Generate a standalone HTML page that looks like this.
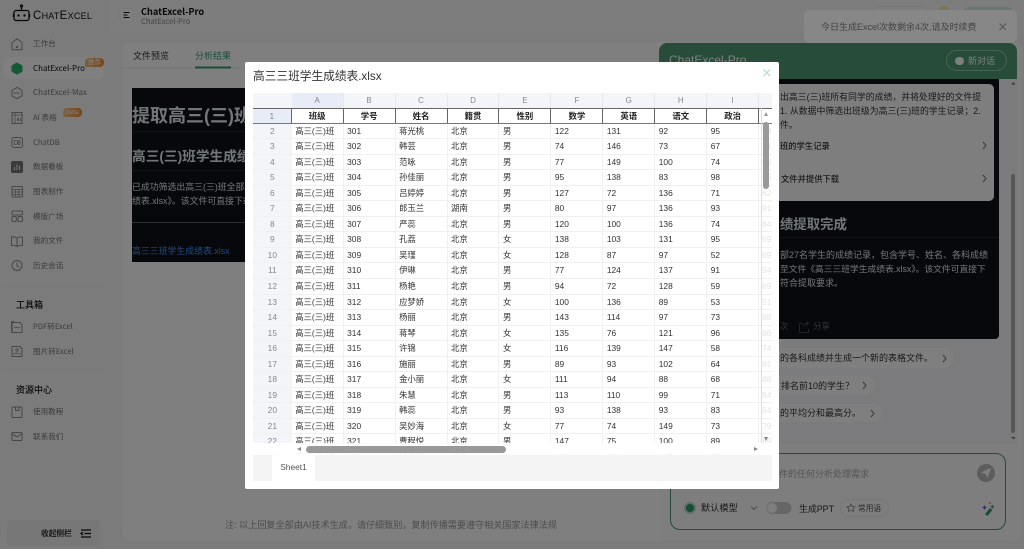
<!DOCTYPE html>
<html lang="zh"><head><meta charset="utf-8"><title>ChatExcel</title>
<style>
*{box-sizing:border-box;margin:0;padding:0}
html{background:#7b7b7b}
html,body{width:1024px;height:549px;overflow:hidden}
body{position:relative;background:#f6f6f7;font-family:"Liberation Sans","Noto Sans CJK SC",sans-serif;color:#333;filter:blur(.3px)}
.a{position:absolute}
.t{position:absolute;white-space:nowrap;line-height:12px;margin-top:-6px}
.n{font-family:"Noto Sans CJK SC","Liberation Sans",sans-serif;font-size:7.600px;color:#777;left:33px}
#ov{position:absolute;left:0;top:0;width:1024px;height:549px;background:rgba(0,0,0,.5)}
#modal{position:absolute;left:245px;top:62px;width:534px;height:427px;background:#fff;border-radius:2px}
#sheet{position:absolute;left:8px;top:30.700px;width:519px;height:362.300px;overflow:hidden;background:#fff;font-size:8.400px;color:#333}
.r{display:flex;height:15.550px;line-height:15px;border-bottom:1px solid #f0f0f0;white-space:nowrap}
.r>*{flex:none;width:51.950px;padding-left:3.500px;border-right:1px solid #f0f0f0;overflow:hidden}
.r>b{width:38.700px;padding:0;text-align:center;background:#f4f5f8;color:#888;font-weight:400;border-right:0}
.r>i{font-style:normal;color:#e4e4e4;border:0;padding-left:3px}
.h{height:15.300px;background:#f4f5f8;border:0;color:#888;font-size:8px;line-height:15px}
.h>*{text-align:center;padding:0;border-right:1px solid #e8e8ea}
.h>:nth-child(2){background:#e8ecf7}
.f{border-top:1px solid #666;border-bottom:1px solid #777;font-weight:700;color:#222}
.f>*{text-align:center;padding:0;border-right:1px solid #666}
.f>b{background:#e8ecf7;color:#888;border-right:1px solid #666}
</style></head><body>

<!-- page under overlay -->
<div class="a" style="left:110px;top:0;width:914px;height:31px;background:#fafafa"></div>
<div class="a" style="left:122px;top:42px;width:900px;height:499px;background:#fff;border-radius:8px"></div>
<div class="a" style="left:3px;top:57px;width:101px;height:22px;background:#fff;border-radius:4px"></div>

<svg class="a" style="left:0;top:0" width="1024" height="549" viewBox="0 0 1024 549" fill="none" stroke="#8e8e8e" stroke-width="1">
<!-- logo -->
<g stroke="#111" stroke-width="1.300"><rect x="14" y="10.500" width="15" height="10" rx="2"/><path d="M21.500 10.500V7"/><circle cx="21.500" cy="6" r="1"/><path d="M13.500 14v3M29.500 14v3"/></g>
<circle cx="18.500" cy="15.500" r="1.200" fill="#111" stroke="none"/><circle cx="24.500" cy="15.500" r="1.200" fill="#111" stroke="none"/>
<!-- home -->
<path d="M12 42.500 17 38.700l5 3.800v6.500a.8.8 0 0 1-.8.8h-8.400a.8.8 0 0 1-.8-.8z"/><circle cx="17" cy="47" r=".6" fill="#8e8e8e"/>
<!-- pro -->
<path d="M17 63l5 2.800v5.500L17 74l-5-2.700v-5.500z" fill="#28b46e" stroke="#28b46e"/>
<!-- max -->
<path d="M17 87.500l5 2.800v5.600L17 98.700l-5-2.800v-5.600z"/><path d="M13.800 93h6.400" stroke-width="1.600" stroke-dasharray="1 .6"/>
<!-- ai -->
<rect x="12" y="112.500" width="10" height="11"/><path d="M15 112.500v11M12 115h10M17 121l1-3 1 3M20.500 118v3" stroke-width=".8"/>
<!-- db -->
<rect x="12" y="137.500" width="10.500" height="10" rx="2"/><path d="M14.500 140.500v4h1a2 2 0 0 0 0-4zM18 140.500v4h1.200a1 1 0 0 0 0-2H18m1.200 0a1 1 0 0 0 0-2H18" stroke-width=".7"/>
<!-- data -->
<rect x="11.500" y="161.500" width="11" height="11" rx="1.500" fill="#777" stroke="#777"/><path d="M14.500 170v-3M17 170v-5.500M19.500 170v-4" stroke="#ddd" stroke-width="1.200"/>
<!-- chart -->
<rect x="12" y="186.500" width="10.500" height="10.500" rx="1"/><path d="M12 189.500h10.500M12 192h10.500M12 194.500h10.500M15.500 189.500V197M19 189.500V197" stroke-width=".7"/>
<!-- template -->
<rect x="12" y="211" width="10.500" height="4" rx="1"/><rect x="12" y="216.500" width="4.300" height="5" rx="1"/><rect x="18" y="216.500" width="4.500" height="5" rx="1"/>
<!-- book -->
<path d="M17 238c-1.500-1-3.500-1.200-5.500-1v8.500c2-.2 4 0 5.500 1 1.500-1 3.500-1.200 5.500-1V237c-2-.2-4 0-5.500 1zM17 238v8.500"/>
<!-- clock -->
<circle cx="17" cy="265.500" r="5"/><path d="M17 262.500v3.300l2 1.500"/>
<!-- pdf -->
<path d="M12 322.500h8l2 2v8h-10zM14 322.500v-.8h-2.500v9.500h.5"/><path d="M14 327.500h6" stroke-width="1.200" stroke-dasharray="1.200 .5"/>
<!-- image -->
<path d="M12 346.500h8l2 2v8h-10z"/><circle cx="17" cy="350" r="1.200" stroke-width=".8"/><path d="M13.500 354.500c2-2 3-2 4-1s2 .5 3-.5" stroke-width=".8"/>
<!-- guide -->
<rect x="12" y="407" width="10" height="10.500" rx="1"/><path d="M15.500 407v3.500h3.500V407"/>
<!-- mail -->
<rect x="12" y="432.500" width="10" height="8" rx=".8"/><path d="M12 433.500l5 3.500 5-3.500"/>
<!-- dividers -->
<path d="M3 285.500h101M3 370.500h101" stroke="#f0f0f0"/>
<!-- header toggle -->
<rect x="120" y="8.500" width="13" height="13.500" rx="2" fill="#fff" stroke="#eee"/>
<path d="M123.500 12.500h6M123.500 15h4M123.500 17.500h6" stroke="#111"/>
<!-- tabs -->
<path d="M122 68h537" stroke="#eee"/>
<path d="M195 67.500h36" stroke="#2f9a6a" stroke-width="2"/>
</svg>

<div class="t" style="left:33px;top:16px;font-size:9px;color:#111;letter-spacing:.25px"><span style="font-size:11.500px">C</span>HAT<span style="font-size:11.500px">E</span>XCEL</div>
<div class="t n" style="top:44px">工作台</div>
<div class="t n" style="top:68.500px;color:#111;font-size:8px">ChatExcel-Pro</div>
<div class="t n" style="top:93px;font-size:8px">ChatExcel-Max</div>
<div class="t n" style="top:117.500px">AI 表格</div>
<div class="t n" style="top:142.500px">ChatDB</div>
<div class="t n" style="top:167px">数据看板</div>
<div class="t n" style="top:191.500px">图表制作</div>
<div class="t n" style="top:216.500px">模版广场</div>
<div class="t n" style="top:241px">我的文件</div>
<div class="t n" style="top:265.500px">历史会话</div>
<div class="t" style="left:16px;top:304.500px;font-size:9px;font-weight:500;color:#111">工具箱</div>
<div class="t n" style="top:327px">PDF转Excel</div>
<div class="t n" style="top:351.500px">图片转Excel</div>
<div class="t" style="left:16px;top:390px;font-size:9px;font-weight:500;color:#111">资源中心</div>
<div class="t n" style="top:412px">使用教程</div>
<div class="t n" style="top:437px">联系我们</div>
<div class="a" style="left:7px;top:520px;width:93px;height:26px;background:#efefef;border-radius:4px"></div>
<svg class="a" style="left:79px;top:526px" width="14" height="14" viewBox="0 0 14 14" fill="none" stroke="#111" stroke-width="1.200"><path d="M2 4h10M5.500 7.500H12M2 11h10M4 6l-2 1.500L4 9"/></svg>
<div class="t" style="left:41px;top:533.500px;font-size:7.700px;font-weight:700;color:#333">收起侧栏</div>
<div class="a" style="left:85px;top:58px;width:19px;height:9px;background:linear-gradient(90deg,#f5c080,#f08a30);border-radius:4px 4px 4px 0;color:#fff;font-size:6.500px;line-height:9px;text-align:center">推荐</div>
<div class="a" style="left:63px;top:108px;width:19px;height:9px;background:linear-gradient(90deg,#f7c585,#f08a30);border-radius:4px 4px 4px 0;color:#fff;font-size:6.500px;line-height:9px;text-align:center">beta</div>

<div class="t" style="left:141px;top:11px;font-size:9.200px;font-weight:700;color:#111;font-family:'Noto Sans CJK SC','Liberation Sans',sans-serif">ChatExcel-Pro</div>
<div class="t" style="left:141px;top:22px;font-size:7.600px;color:#888;font-family:'Noto Sans CJK SC','Liberation Sans',sans-serif">ChatExcel-Pro</div>

<div class="t" style="left:133px;top:55.500px;font-size:9px;color:#333">文件预览</div>
<div class="t" style="left:195px;top:55.500px;font-size:9px;color:#2f9a6a">分析结果</div>

<!-- left dark doc -->
<div class="a" style="left:132px;top:88px;width:400px;height:174px;background:#0d1117;overflow:hidden;color:#e6edf3">
 <div class="t" style="left:0;top:28px;font-size:18px;font-weight:700;line-height:22px;margin-top:-11px">提取高三(三)班学生成绩</div>
 <div class="a" style="left:0;top:43px;width:400px;height:1px;background:#21262d"></div>
 <div class="t" style="left:0;top:69px;font-size:13.700px;font-weight:700;line-height:18px;margin-top:-9px">高三(三)班学生成绩提取完成</div>
 <div class="a" style="left:0;top:82px;width:400px;height:1px;background:#21262d"></div>
 <div class="t" style="left:0;top:99px;font-size:8.900px">已成功筛选出高三(三)班全部27名学生的成绩记录</div>
 <div class="t" style="left:0;top:113px;font-size:8.900px">绩表.xlsx》。该文件可直接下载</div>
 <div class="a" style="left:0;top:134px;width:400px;height:1px;background:#565c64"></div>
 <div class="t" style="left:0;top:163px;font-size:8.900px;color:#4493f8">高三三班学生成绩表.xlsx</div>
</div>
<div class="t" style="left:225px;top:525px;font-size:9.100px;color:#999">注: 以上回复全部由AI技术生成&#65292;请仔细甄别&#65292;复制传播需要遵守相关国家法律法规</div>

<!-- top-right remnants -->
<div class="a" style="left:875px;top:6px;width:50px;height:16px;border:1px solid #eee;border-radius:5px;background:#fff"></div>
<div class="a" style="left:938px;top:6px;width:12px;height:12px;border-radius:50%;background:#ffe9a0"></div>
<div class="a" style="left:963px;top:7px;width:50px;height:16px;border-radius:5px;background:#d0f0e0"></div>

<!-- right panel -->
<div class="a" style="left:659px;top:43px;width:358px;height:498px;background:#f7f7fa;border-radius:8px;overflow:hidden">
 <div class="a" style="left:0;top:0;width:358px;height:36px;background:#4e9b75"></div>
 <div class="t" style="left:10px;top:17px;font-size:12px;color:#fff;line-height:14px;margin-top:-7px">ChatExcel-Pro</div>
 <div class="a" style="left:287px;top:7px;width:61px;height:21px;border:1px solid #8cc4a8;border-radius:11px"></div>
 <div class="a" style="left:296px;top:13.500px;width:8.500px;height:8.500px;border-radius:50%;background:#fff"></div>
 <div class="t" style="left:309px;top:18px;font-size:9px;color:#fff">新对话</div>
 <!-- dark card -->
 <div class="a" style="left:0;top:36px;width:340px;height:260px;background:#0d1117;border-radius:0 0 4px 4px"></div>
 <div class="a" style="left:0;top:41px;width:335px;height:117px;background:#fdfdff;border-radius:0 5px 5px 0"></div>
 <!-- scrollbar -->
 <div class="a" style="left:352px;top:131px;width:4px;height:259px;background:#b0b0b0;border-radius:2px"></div>
 <!-- input section -->
 <div class="a" style="left:0;top:400px;width:358px;height:98px;background:#fcfcfc"></div>
 <div class="a" style="left:11px;top:410px;width:336px;height:77px;border:1px solid #4e9b75;border-radius:10px"></div>
</div>
<div style="font-size:9px;color:#333">
 <div class="a" style="left:700px;top:348px;width:253px;height:20px;background:#fff;border-radius:8px"></div>
 <div class="a" style="left:700px;top:376px;width:174px;height:19px;background:#fff;border-radius:8px"></div>
 <div class="a" style="left:700px;top:404px;width:182px;height:18px;background:#fff;border-radius:8px"></div>
 <div class="t" style="left:780px;top:96.700px;font-size:8.900px">出高三(三)班所有同学的成绩&#65292;并将处理好的文件提</div>
 <div class="t" style="left:780px;top:110.500px;font-size:8.900px">1. 从数据中筛选出班级为高三(三)班的学生记录&#65307;2.</div>
 <div class="t" style="left:780px;top:124.500px;font-size:8.900px">件。</div>
 <div class="t" style="left:780px;top:145.500px;font-size:8.300px;font-weight:500">班的学生记录</div>
 <div class="t" style="left:781px;top:178.500px;font-size:8.300px;font-weight:500">文件并提供下载</div>
 <div class="t" style="left:780px;top:225px;font-size:13.400px;font-weight:700;color:#e6edf3;line-height:16px;margin-top:-8px">绩提取完成</div>
 <div class="a" style="left:779px;top:237px;width:220px;height:1px;background:#21262d"></div>
 <div class="t" style="left:780px;top:255px;color:#e6edf3">部27名学生的成绩记录&#65292;包含学号、姓名、各科成绩</div>
 <div class="t" style="left:780px;top:269px;font-size:8.750px;color:#e6edf3">至文件《高三三班学生成绩表.xlsx》。该文件可直接下</div>
 <div class="t" style="left:780px;top:283px;color:#e6edf3">符合提取要求。</div>
 <div class="t" style="left:780px;top:326px;font-size:8.500px;color:#666">次</div>
 <div class="t" style="left:813px;top:326px;font-size:8.500px;color:#666">分享</div>
 <div class="t" style="left:780px;top:358px">的各科成绩并生成一个新的表格文件。</div>
 <div class="t" style="left:781px;top:385.500px">排名前10的学生&#65311;</div>
 <div class="t" style="left:780px;top:413px">的平均分和最高分。</div>
 <div class="t" style="left:779px;top:474px;color:#aaa">件的任何分析处理需求</div>
 <div class="t" style="left:701px;top:508px;font-size:9.200px">默认模型</div>
 <div class="t" style="left:799px;top:508.500px;font-size:8.900px">生成PPT</div>
 <div class="t" style="left:858px;top:508.500px;font-size:7.700px;color:#555">常用语</div>
</div>
<svg class="a" style="left:0;top:0" width="1024" height="549" viewBox="0 0 1024 549" fill="none" stroke="#777">
 <path d="M983 142l3 3.500-3 3.500M983 175l3 3.500-3 3.500M943 355l3 3.500-3 3.500M863 382l3 3.500-3 3.500M871 410l3 3.500-3 3.500" />
 <path d="M1011 84.500l2.500-2.500 2 2.500z M1011 437l2.500 2.500 2-2.500z" fill="#777" stroke="none"/>
 <path d="M803 323.500h-3.500v9h9V329M803 326.500c1-2 3-3 5-3m-1.500-1.500 2 1.500-2 1.500" stroke="#555" stroke-width=".8"/>
 <circle cx="986" cy="473" r="9" fill="#bbb" stroke="none"/><path d="M981 472.500l10-4.500-3.500 10-1.800-4z" fill="#fff" stroke="none"/>
 <circle cx="690" cy="508" r="6" fill="#b9dcca" stroke="none"/><circle cx="690" cy="508" r="4" fill="#2f9a6a" stroke="none"/>
 <path d="M751 506.500l3 3 3-3" stroke="#999"/>
 <rect x="766.500" y="502" width="25" height="12" rx="6" fill="#ccc" stroke="none"/><circle cx="772" cy="508" r="5" fill="#fff" stroke="none"/>
 <rect x="840.500" y="499.500" width="48" height="17" rx="8.500" stroke="#eee"/>
 <path d="M851 504l1.200 2.500 2.800.3-2 1.900.5 2.800-2.500-1.400-2.500 1.400.5-2.800-2-1.900 2.800-.3z" stroke="#777" stroke-width=".7"/>
 <path d="M985 514l5-6 2.500 2-5 6z" fill="#3e9a6c" stroke="none"/><path d="M990.500 506.500l2-1.500 1.500 1.500-1.500 2z" fill="#3e9a6c" stroke="none"/>
 <path d="M984.500 505l.8 1.700 1.700.8-1.700.8-.8 1.700-.8-1.700-1.700-.8 1.700-.8z" fill="#6a4ff0" stroke="none"/><circle cx="990" cy="503" r="1" fill="#f0a030" stroke="none"/>
</svg>

<div id="ov"></div>

<!-- toast sits above the overlay -->
<div class="a" style="left:804px;top:10px;width:213px;height:33px;background:#878787;border-radius:6px"></div>
<div class="t" style="left:821px;top:27px;font-size:9px;color:#444">今日生成Excel次数剩余4次,请及时续费</div>
<svg class="a" style="left:998px;top:22px" width="10" height="10" fill="none" stroke="#555"><path d="M1.500 1.500l6.500 6.500M8 1.500L1.500 8"/></svg>

<!-- modal -->
<div id="modal">
 <div class="t" style="left:8px;top:15px;font-size:11.700px;color:#333;line-height:14px;margin-top:-7px">高三三班学生成绩表.xlsx</div>
 <svg class="a" style="left:517px;top:6px" width="10" height="10" fill="none" stroke="#a9d8c4"><path d="M1.500 1.500l6.500 6.500M8 1.500L1.500 8"/></svg>
 <div id="sheet">
  <div class="r h"><b></b><span>A</span><span>B</span><span>C</span><span>D</span><span>E</span><span>F</span><span>G</span><span>H</span><span>I</span><span></span></div>
  <div class="r f"><b>1</b><span>班级</span><span>学号</span><span>姓名</span><span>籍贯</span><span>性别</span><span>数学</span><span>英语</span><span>语文</span><span>政治</span><i></i></div>
  <div class="r"><b>2</b><span>高三(三)班</span><span>301</span><span>蒋光桃</span><span>北京</span><span>男</span><span>122</span><span>131</span><span>92</span><span>95</span><i>53</i></div>
  <div class="r"><b>3</b><span>高三(三)班</span><span>302</span><span>韩芸</span><span>北京</span><span>男</span><span>74</span><span>146</span><span>73</span><span>67</span><i>71</i></div>
  <div class="r"><b>4</b><span>高三(三)班</span><span>303</span><span>范咏</span><span>北京</span><span>男</span><span>77</span><span>149</span><span>100</span><span>74</span><i>56</i></div>
  <div class="r"><b>5</b><span>高三(三)班</span><span>304</span><span>孙佳丽</span><span>北京</span><span>男</span><span>95</span><span>138</span><span>83</span><span>98</span><i>55</i></div>
  <div class="r"><b>6</b><span>高三(三)班</span><span>305</span><span>吕婷婷</span><span>北京</span><span>男</span><span>127</span><span>72</span><span>136</span><span>71</span><i>62</i></div>
  <div class="r"><b>7</b><span>高三(三)班</span><span>306</span><span>郎玉兰</span><span>湖南</span><span>男</span><span>80</span><span>97</span><span>136</span><span>93</span><i>91</i></div>
  <div class="r"><b>8</b><span>高三(三)班</span><span>307</span><span>严蕊</span><span>北京</span><span>男</span><span>120</span><span>100</span><span>136</span><span>74</span><i>84</i></div>
  <div class="r"><b>9</b><span>高三(三)班</span><span>308</span><span>孔荔</span><span>北京</span><span>女</span><span>138</span><span>103</span><span>131</span><span>95</span><i>59</i></div>
  <div class="r"><b>10</b><span>高三(三)班</span><span>309</span><span>吴瑾</span><span>北京</span><span>女</span><span>128</span><span>87</span><span>97</span><span>52</span><i>69</i></div>
  <div class="r"><b>11</b><span>高三(三)班</span><span>310</span><span>伊琳</span><span>北京</span><span>男</span><span>77</span><span>124</span><span>137</span><span>91</span><i>94</i></div>
  <div class="r"><b>12</b><span>高三(三)班</span><span>311</span><span>杨艳</span><span>北京</span><span>男</span><span>94</span><span>72</span><span>128</span><span>59</span><i>69</i></div>
  <div class="r"><b>13</b><span>高三(三)班</span><span>312</span><span>应梦娇</span><span>北京</span><span>女</span><span>100</span><span>136</span><span>89</span><span>53</span><i>51</i></div>
  <div class="r"><b>14</b><span>高三(三)班</span><span>313</span><span>杨丽</span><span>北京</span><span>男</span><span>143</span><span>114</span><span>97</span><span>73</span><i>88</i></div>
  <div class="r"><b>15</b><span>高三(三)班</span><span>314</span><span>蒋琴</span><span>北京</span><span>女</span><span>135</span><span>76</span><span>121</span><span>96</span><i>86</i></div>
  <div class="r"><b>16</b><span>高三(三)班</span><span>315</span><span>许锦</span><span>北京</span><span>女</span><span>116</span><span>139</span><span>147</span><span>58</span><i>74</i></div>
  <div class="r"><b>17</b><span>高三(三)班</span><span>316</span><span>施丽</span><span>北京</span><span>男</span><span>89</span><span>93</span><span>102</span><span>64</span><i>91</i></div>
  <div class="r"><b>18</b><span>高三(三)班</span><span>317</span><span>金小丽</span><span>北京</span><span>女</span><span>111</span><span>94</span><span>88</span><span>68</span><i>88</i></div>
  <div class="r"><b>19</b><span>高三(三)班</span><span>318</span><span>朱慧</span><span>北京</span><span>男</span><span>113</span><span>110</span><span>99</span><span>71</span><i>84</i></div>
  <div class="r"><b>20</b><span>高三(三)班</span><span>319</span><span>韩蕊</span><span>北京</span><span>男</span><span>93</span><span>138</span><span>93</span><span>83</span><i>64</i></div>
  <div class="r"><b>21</b><span>高三(三)班</span><span>320</span><span>吴妙海</span><span>北京</span><span>女</span><span>77</span><span>74</span><span>149</span><span>73</span><i>79</i></div>
  <div class="r"><b>22</b><span>高三(三)班</span><span>321</span><span>曹程悦</span><span>北京</span><span>男</span><span>147</span><span>75</span><span>100</span><span>89</span><i>89</i></div>
  <div class="r"><b>23</b><span>高三(三)班</span><span>322</span><span>钱佳慧</span><span>北京</span><span>女</span><span>117</span><span>126</span><span>145</span><span>77</span><i>87</i></div>
  <!-- v scrollbar -->
  <div class="a" style="left:507.500px;top:15px;width:1px;height:335px;background:#dcdcdc"></div>
  <div class="a" style="left:510px;top:29px;width:6px;height:67px;background:#999;border-radius:3px"></div>
  <div class="a" style="left:510.500px;top:19.500px;width:0;height:0;border:2.500px solid transparent;border-bottom:4px solid #999;border-top:0"></div>
  <div class="a" style="left:510.500px;top:344.500px;width:0;height:0;border:2.500px solid transparent;border-top:4px solid #888;border-bottom:0"></div>
  <!-- h scrollbar -->
  <div class="a" style="left:0;top:350.300px;width:519px;height:12px;background:rgba(255,255,255,.92)"></div>
  <div class="a" style="left:53px;top:353px;width:200px;height:7px;background:#999;border-radius:3.500px"></div>
  <div class="a" style="left:43.500px;top:354px;width:0;height:0;border:2.500px solid transparent;border-right:4px solid #888;border-left:0"></div>
  <div class="a" style="left:500.500px;top:354px;width:0;height:0;border:2.500px solid transparent;border-left:4px solid #888;border-right:0"></div>
 </div>
 <div class="a" style="left:8px;top:393px;width:519px;height:26px;background:#f4f4f5"></div>
 <div class="a" style="left:27px;top:393px;width:43px;height:26px;background:#fff;font-size:8.400px;color:#555;text-align:center;line-height:24px">Sheet1</div>
</div>
</body></html>
